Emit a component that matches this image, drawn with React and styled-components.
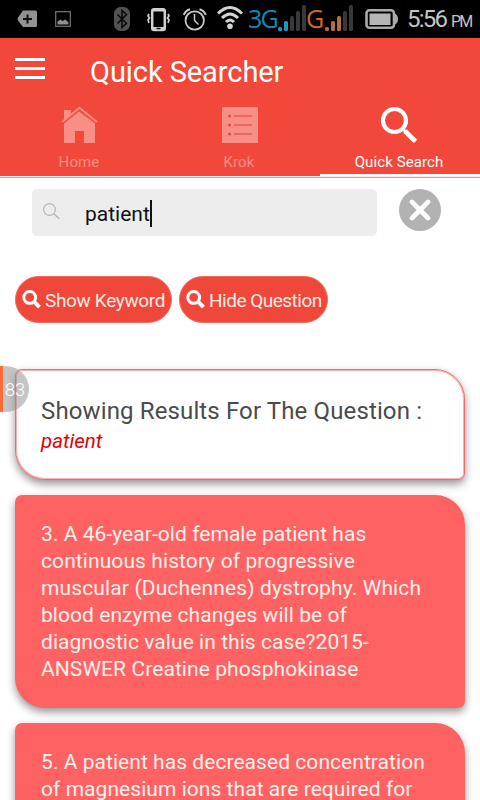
import React from "react";
import styled, { createGlobalStyle } from "styled-components";

const GlobalStyle = createGlobalStyle`
  * { box-sizing: border-box; }
  html, body { margin: 0; padding: 0; background: #fff; }
  body { font-family: Roboto, "Liberation Sans", sans-serif; overflow: hidden; }
  svg { display: block; flex: none; }
`;

const Screen = styled.div`
  position: relative;
  width: 480px;
  height: 800px;
  overflow: hidden;
  background: #fff;
`;

const StatusBar = styled.div`
  display: flex;
  align-items: flex-start;
  height: 38px;
  background: #000;
`;

const StatusItem = styled.div`
  flex: none;
  width: ${(p) => p.$w}px;
  margin-left: ${(p) => p.$gap || 0}px;
`;

const Network = styled.div`
  flex: none;
  width: ${(p) => p.$w}px;
  margin-left: ${(p) => p.$gap}px;
  color: ${(p) => p.$color};
  font: 400 25px/36px "Open Sans", "Noto Sans", sans-serif;
  letter-spacing: -1.8px;
  white-space: nowrap;
`;

const Clock = styled.div`
  margin-left: 9px;
  color: #c4c4c4;
  font-size: 24px;
  line-height: 39px;
  letter-spacing: -1.8px;
  white-space: nowrap;
`;

const Meridiem = styled.span`
  margin-left: 5px;
  font-size: 16px;
  letter-spacing: -1.8px;
`;

const Header = styled.header`
  height: 138px;
  background: #f1483b;
  color: #fff;
`;

const TitleRow = styled.div`
  display: flex;
  align-items: center;
  height: 66px;
  padding-left: 15px;
`;

const MenuButton = styled.div`
  display: flex;
  flex-direction: column;
  gap: 6px;
  width: 30px;
  margin: -5px 45px 0 0;
`;

const MenuLine = styled.span`
  height: 3px;
  background: #fff;
`;

const Title = styled.h1`
  margin: 1px 0 0;
  font-size: 29px;
  font-weight: 400;
  line-height: 34px;
  letter-spacing: -0.07px;
`;

const Tabs = styled.nav`
  display: grid;
  grid-template-columns: repeat(3, 1fr);
  height: 72px;
`;

const Tab = styled.div`
  display: flex;
  flex-direction: column;
  align-items: center;
  padding-top: 1px;
  color: ${(p) => (p.$active ? "#fff" : "#f88f86")};
  border-bottom: 2px solid ${(p) => (p.$active ? "#fff" : "#f1483b")};
  font-size: 15px;
  line-height: 18px;
`;

const TabLabel = styled.span`
  margin: 10px 2px 0 0;
  letter-spacing: ${(p) => p.$spacing || 0}px;
`;

const Divider = styled.div`
  height: 2px;
  border-bottom: 1px solid #e2a19e;
  background: #fbe9e7;
`;

const SearchRow = styled.div`
  display: flex;
  align-items: flex-start;
  padding: 11px 0 0 32px;
`;

const SearchField = styled.div`
  display: flex;
  align-items: center;
  width: 345px;
  height: 47px;
  padding-left: 10px;
  border-radius: 5px;
  background: #ededed;
  color: #111;
  font-size: 21px;
`;

const Query = styled.span`
  margin: 3px 0 0 24px;
`;

const Caret = styled.span`
  width: 2px;
  height: 27px;
  margin-top: 2px;
  background: #111;
`;

const ClearButton = styled.div`
  display: flex;
  align-items: center;
  justify-content: center;
  width: 42px;
  height: 42px;
  margin-left: 22px;
  border-radius: 50%;
  background: #b2b2b2;
`;

const Actions = styled.div`
  display: flex;
  gap: 7px;
  padding: 40px 15px 0;
`;

const ActionButton = styled.div`
  display: flex;
  align-items: center;
  width: ${(p) => p.$w}px;
  height: 47px;
  padding-left: 6px;
  border: 1px solid #f4695d;
  border-radius: 24px;
  background: #ef473a;
  color: #ffe9e3;
  font-size: 19px;
  white-space: nowrap;
  letter-spacing: ${(p) => p.$spacing}px;
`;

const ActionLabel = styled.span`
  margin: 1px 0 0 4px;
`;

const Results = styled.main`
  display: flex;
  flex-direction: column;
  gap: 15px;
  padding: 46px 15px 0;
`;

const Card = styled.section`
  flex: none;
  height: ${(p) => p.$h}px;
  padding: 26px 0 0 26px;
  border-radius: 7px 30px 7px 30px;
  background: #ff6262;
  color: #fff0ec;
  box-shadow: 0 4px 9px rgba(0, 0, 0, 0.42);
  font-size: 21px;
  line-height: 27px;
`;

const SummaryCard = styled(Card)`
  padding: 26px 0 0 25px;
  border: 1px solid #f5686c;
  background: #fff;
  box-shadow: inset 0 0 0 1px #fbb0b2, 0 4px 9px rgba(0, 0, 0, 0.42);
`;

const SummaryTitle = styled.h2`
  margin: 0;
  color: #4b4b4b;
  font-size: 24px;
  font-weight: 400;
  line-height: 30px;
  letter-spacing: 0.13px;
  white-space: nowrap;
`;

const Keyword = styled.em`
  display: block;
  margin-top: 2px;
  color: #e60000;
  font-size: 20.5px;
  line-height: 27px;
`;

const Line = styled.div`
  white-space: nowrap;
  letter-spacing: ${(p) => p.$spacing}px;
`;

const FloatingBadge = styled.div`
  position: absolute;
  left: 0;
  top: 366px;
  display: flex;
  align-items: center;
  width: 29px;
  height: 46px;
  padding-left: 2px;
  border-left: 3px solid #fb6b35;
  border-radius: 0 23px 23px 0;
  background: rgba(145, 145, 145, 0.53);
  color: #fff;
  font-size: 18px;
  font-weight: 300;
`;

const BAR_HEIGHTS = [4, 10, 15, 20, 26];

function SignalBars({ color }) {
  return (
    <svg width="29" height="38" viewBox="0 0 29 38">
      {BAR_HEIGHTS.map((h, i) => (
        <rect key={i} x={i * 6} y={31 - h} width="4" height={h} rx="1.5"
          fill={color[i] || "#38383a"} />
      ))}
    </svg>
  );
}

function ActionSearchIcon() {
  return (
    <svg width="19" height="19" viewBox="0 0 19 19" fill="none" stroke="#fff">
      <circle cx="7.7" cy="7.4" r="5.9" strokeWidth="3" />
      <path d="M12 11.7l5.500 5.500" strokeWidth="4" />
    </svg>
  );
}

const QUESTIONS = [
  {
    height: 213,
    lines: [
      ["3. A 46-year-old female patient has", 0.05],
      ["continuous history of progressive", 0.09],
      ["muscular (Duchennes) dystrophy. Which", 0.13],
      ["blood enzyme changes will be of", 0.06],
      ["diagnostic value in this case?2015-", 0.05],
      ["ANSWER Creatine phosphokinase", 0.08],
    ],
  },
  {
    height: 213,
    lines: [
      ["5. A patient has decreased concentration", 0.05],
      ["of magnesium ions that are required for", 0.05],
    ],
  },
];

export default function App() {
  return (
    <Screen>
      <GlobalStyle />
      <StatusBar>
        <StatusItem $w={20} $gap={17}>
          <svg width="20" height="38" viewBox="0 0 20 38">
            <path d="M6 10.5h12.500q1.500 0 1.500 1.500v13.500q0 1.500-1.500 1.500H6L1 20.500q-1-1.500 0-3z" fill="#929292" />
            <path d="M10.500 14.500v9M6 19h9" stroke="#111" strokeWidth="2" />
          </svg>
        </StatusItem>
        <StatusItem $w={16} $gap={18}>
          <svg width="16" height="38" viewBox="0 0 16 38">
            <rect x=".7" y="11.700" width="14.600" height="14.600" fill="none" stroke="#777" strokeWidth="1.200" />
            <path d="M2.500 24.500v-3l3-2 2 1.500 3-1.500 3 3v2z" fill="#909090" />
          </svg>
        </StatusItem>
        <StatusItem $w={16} $gap={43}>
          <svg width="16" height="38" viewBox="0 0 16 38">
            <rect y="7" width="16" height="24" rx="6.500" fill="#525252" />
            <path d="M3.500 14.500l9 9-4.500 4V10.500l4.500 4-9 9" fill="none" stroke="#090909" strokeWidth="1.500" />
          </svg>
        </StatusItem>
        <StatusItem $w={24} $gap={17}>
          <svg width="24" height="38" viewBox="0 0 24 38" fill="none" stroke="#d0d0d0">
            <rect x="5.200" y="9.200" width="12.600" height="20.800" rx="2" strokeWidth="2.500" />
            <path d="M6 10h11M6 28.500h11" strokeWidth="3" />
            <path d="M9.500 28.500h4" stroke="#111" strokeWidth="1.500" />
            <path d="M2 14l-1 2 1.500 2L1 20l1 3M21 14l1 2-1.500 2 1.500 2-1 3" strokeWidth="1.700" />
          </svg>
        </StatusItem>
        <StatusItem $w={24} $gap={12}>
          <svg width="24" height="38" viewBox="0 0 24 38" fill="none" stroke="#c8c8c8">
            <circle cx="11.700" cy="20.500" r="9.200" strokeWidth="1.800" />
            <path d="M11.500 14v6.500l4 4" strokeWidth="1.500" />
            <path d="M.8 15Q2.500 10.500 7 9.300M16.500 9.300Q21 10.500 22.700 15" strokeWidth="2" />
          </svg>
        </StatusItem>
        <StatusItem $w={26} $gap={10}>
          <svg width="26" height="38" viewBox="0 0 26 38" fill="none" stroke="#d4d4d4">
            <path d="M1 13.500q12-12 24 0M5 18q8-8 16 0M9 22q4-4 8 0" strokeWidth="3" />
            <circle cx="13" cy="26.300" r="2.800" fill="#d4d4d4" stroke="none" />
          </svg>
        </StatusItem>
        <Network $w={30} $gap={5} $color="#1389b4">3G</Network>
        <StatusItem $w={29}>
          <SignalBars color={["#1598ca", "#1598ca"]} />
        </StatusItem>
        <Network $w={19} $gap={-1} $color="#d7681f">G</Network>
        <StatusItem $w={29}>
          <SignalBars color={["#b56c3f", "#b56c3f", "#b56c3f"]} />
        </StatusItem>
        <StatusItem $w={33} $gap={11}>
          <svg width="33" height="38" viewBox="0 0 33 38">
            <rect x="1.500" y="10.300" width="27.500" height="17.500" rx="3" fill="none" stroke="#aaa" strokeWidth="2.600" />
            <path d="M29.500 13.500q3.500 1 3.500 5.500t-3.500 5.500z" fill="#aaa" />
            <rect x="4.500" y="13.500" width="21" height="11.500" fill="#b5b5b5" />
          </svg>
        </StatusItem>
        <Clock>5:56<Meridiem>PM</Meridiem></Clock>
      </StatusBar>

      <Header>
        <TitleRow>
          <MenuButton><MenuLine /><MenuLine /><MenuLine /></MenuButton>
          <Title>Quick Searcher</Title>
        </TitleRow>
        <Tabs>
          <Tab>
            <svg width="39" height="38" viewBox="0 0 39 38">
              <path d="M3 5h7v5l-7 6zM3 18.500L18 6.500 34 18.500V38H23V26h-9v12H3z" fill="#f88f86" />
              <path d="M1 17L18.500 2.800 36 17" fill="none" stroke="#f88f86" strokeWidth="2" />
              <path d="M2.500 18.500L18.500 5.500 34.500 18.500" fill="none" stroke="#ee5c50" strokeWidth="1" />
            </svg>
            <TabLabel $spacing={0.1}>Home</TabLabel>
          </Tab>
          <Tab>
            <svg width="36" height="38" viewBox="0 0 36 38">
              <path d="M0 2h36v36H0z" fill="#f88f86" />
              <g stroke="#e9594d" strokeWidth="1.700">
                <path d="M12 11h18M12 20h18M12 29h18" />
              </g>
              <g fill="#df4b40">
                <circle cx="7.500" cy="11" r="1.600" />
                <circle cx="7.500" cy="20" r="1.600" />
                <circle cx="7.500" cy="29" r="1.600" />
              </g>
            </svg>
            <TabLabel $spacing={0.1}>Krok</TabLabel>
          </Tab>
          <Tab $active>
            <svg width="40" height="38" viewBox="0 0 40 38" fill="none" stroke="#fff">
              <circle cx="14.500" cy="15.500" r="11.500" strokeWidth="4.200" />
              <path d="M23 24l2.500 2.500" strokeWidth="3" />
              <path d="M25 26L35.500 36.500" strokeWidth="4.700" />
            </svg>
            <TabLabel $spacing={0.1}>Quick Search</TabLabel>
          </Tab>
        </Tabs>
      </Header>
      <Divider />

      <SearchRow>
        <SearchField>
          <svg width="19" height="19" viewBox="0 0 19 19" fill="none" stroke="#b5b5b5">
            <circle cx="7.500" cy="6.500" r="5.900" strokeWidth="1.200" />
            <path d="M11.800 10.800l5.500 5" strokeWidth="1.500" />
          </svg>
          <Query>patient</Query>
          <Caret />
        </SearchField>
        <ClearButton>
          <svg width="22" height="22" viewBox="0 0 22 22">
            <path d="M3 3l16 16M19 3L3 19" stroke="#fff" strokeWidth="4.600" strokeLinecap="round" />
          </svg>
        </ClearButton>
      </SearchRow>

      <Actions>
        <ActionButton $w={157} $spacing={-0.35}>
          <ActionSearchIcon /><ActionLabel>Show Keyword</ActionLabel>
        </ActionButton>
        <ActionButton $w={149} $spacing={-0.5}>
          <ActionSearchIcon /><ActionLabel>Hide Question</ActionLabel>
        </ActionButton>
      </Actions>

      <Results>
        <SummaryCard $h={111}>
          <SummaryTitle>Showing Results For The Question :</SummaryTitle>
          <Keyword>patient</Keyword>
        </SummaryCard>
        {QUESTIONS.map((q) => (
          <Card key={q.lines[0][0]} $h={q.height}>
            {q.lines.map(([text, spacing]) => (
              <Line key={text} $spacing={spacing}>{text}</Line>
            ))}
          </Card>
        ))}
      </Results>

      <FloatingBadge>83</FloatingBadge>
    </Screen>
  );
}
